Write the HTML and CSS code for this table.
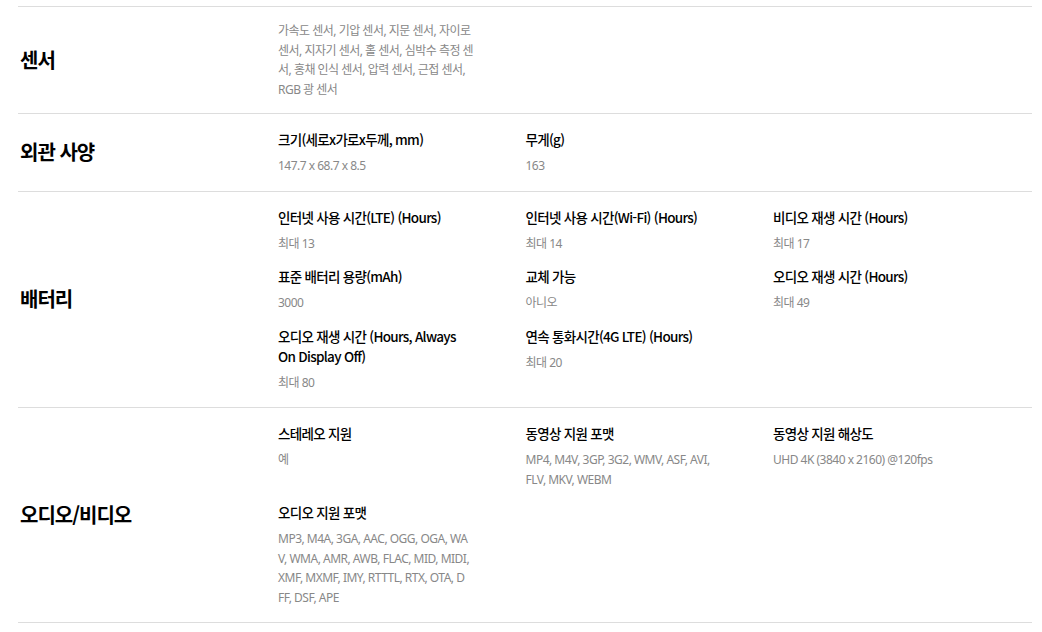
FILE: index.html
```html
<!DOCTYPE html>
<html lang="ko">
<head>
    <meta charset="UTF-8">
    <meta name="viewport" content="width=device-width, initial-scale=1.0">
    <title>사양</title>
    <link rel="stylesheet" href="styles.css">
</head>
<body>
    <div class="spec-list">
        <section class="spec-row spec-row--compact">
            <h3 class="spec-name">센서</h3>
            <div class="spec-items">
                <div class="spec-item">
                    <p class="spec-value">가속도 센서, 기압 센서, 지문 센서, 자이로<br>센서, 지자기 센서, 홀 센서, 심박수 측정 센<br>서, 홍채 인식 센서, 압력 센서, 근접 센서,<br>RGB 광 센서</p>
                </div>
            </div>
        </section>

        <section class="spec-row">
            <h3 class="spec-name">외관 사양</h3>
            <div class="spec-items">
                <div class="spec-item">
                    <p class="spec-title">크기(세로x가로x두께, mm)</p>
                    <p class="spec-value">147.7 x 68.7 x 8.5</p>
                </div>
                <div class="spec-item">
                    <p class="spec-title">무게(g)</p>
                    <p class="spec-value">163</p>
                </div>
            </div>
        </section>

        <section class="spec-row">
            <h3 class="spec-name">배터리</h3>
            <div class="spec-items">
                <div class="spec-item">
                    <p class="spec-title">인터넷 사용 시간(LTE) (Hours)</p>
                    <p class="spec-value">최대 13</p>
                </div>
                <div class="spec-item">
                    <p class="spec-title">인터넷 사용 시간(Wi-Fi) (Hours)</p>
                    <p class="spec-value">최대 14</p>
                </div>
                <div class="spec-item">
                    <p class="spec-title">비디오 재생 시간 (Hours)</p>
                    <p class="spec-value">최대 17</p>
                </div>
                <div class="spec-item">
                    <p class="spec-title">표준 배터리 용량(mAh)</p>
                    <p class="spec-value">3000</p>
                </div>
                <div class="spec-item">
                    <p class="spec-title">교체 가능</p>
                    <p class="spec-value">아니오</p>
                </div>
                <div class="spec-item">
                    <p class="spec-title">오디오 재생 시간 (Hours)</p>
                    <p class="spec-value">최대 49</p>
                </div>
                <div class="spec-item">
                    <p class="spec-title">오디오 재생 시간 (Hours, Always On Display Off)</p>
                    <p class="spec-value">최대 80</p>
                </div>
                <div class="spec-item">
                    <p class="spec-title">연속 통화시간(4G LTE) (Hours)</p>
                    <p class="spec-value">최대 20</p>
                </div>
            </div>
        </section>

        <section class="spec-row">
            <h3 class="spec-name">오디오/비디오</h3>
            <div class="spec-items">
                <div class="spec-item">
                    <p class="spec-title">스테레오 지원</p>
                    <p class="spec-value">예</p>
                </div>
                <div class="spec-item">
                    <p class="spec-title">동영상 지원 포맷</p>
                    <p class="spec-value">MP4, M4V, 3GP, 3G2, WMV, ASF, AVI,<br>FLV, MKV, WEBM</p>
                </div>
                <div class="spec-item">
                    <p class="spec-title">동영상 지원 해상도</p>
                    <p class="spec-value">UHD 4K (3840 x 2160) @120fps</p>
                </div>
                <div class="spec-item">
                    <p class="spec-title">오디오 지원 포맷</p>
                    <p class="spec-value">MP3, M4A, 3GA, AAC, OGG, OGA, WA<br>V, WMA, AMR, AWB, FLAC, MID, MIDI,<br>XMF, MXMF, IMY, RTTTL, RTX, OTA, D<br>FF, DSF, APE</p>
                </div>
            </div>
        </section>
    </div>
</body>
</html>
```

FILE: styles.css
```css
* {
    margin: 0;
    padding: 0;
    box-sizing: border-box;
}

body {
    font-family: "Noto Sans CJK KR", sans-serif;
    background-color: #ffffff;
    color: #000000;
}

.spec-list {
    margin: 0 10px 0 18px;
    padding-top: 6px;
}

.spec-row {
    display: grid;
    grid-template-columns: 260px 1fr;
    align-items: center;
    border-top: 1px solid #dddddd;
    padding: 15px 0;
}

.spec-row--compact {
    padding: 14px 0;
}

.spec-row:last-child {
    border-bottom: 1px solid #dddddd;
}

.spec-name {
    padding-left: 2px;
    font-size: 20px;
    font-weight: 700;
    letter-spacing: -1px;
    line-height: 28px;
}

.spec-items {
    display: grid;
    grid-template-columns: repeat(3, 247.5px);
    row-gap: 13px;
}

.spec-item {
    padding-right: 54px;
}

.spec-title {
    font-size: 13.5px;
    font-weight: 500;
    letter-spacing: -0.7px;
    line-height: 20px;
    margin-bottom: 7px;
}

/* value lines are broken by hand, as on the source page */
.spec-value {
    font-family: "Noto Sans", "Noto Sans CJK KR", sans-serif;
    font-size: 12px;
    letter-spacing: -0.5px;
    line-height: 19.5px;
    color: #888888;
    white-space: nowrap;
}
```
